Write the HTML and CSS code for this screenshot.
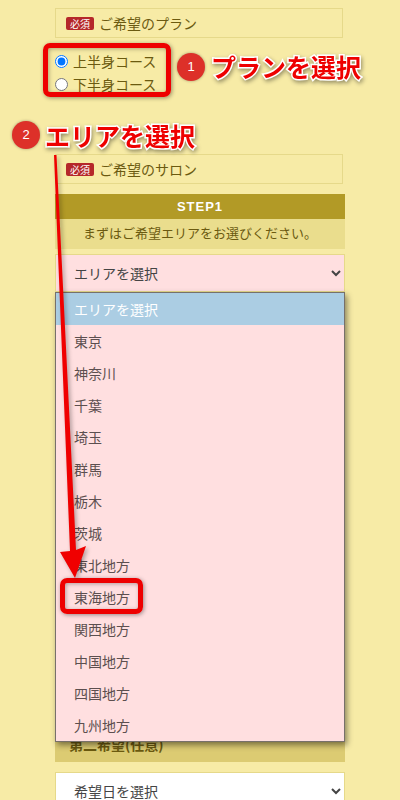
FILE: index.html
```html
<!DOCTYPE html>
<html lang="ja">

<head>
    <title>ご希望のプラン</title>
    <meta http-equiv="Content-Type" content="text/html; charset=utf-8">
    <link rel="stylesheet" href="styles.css">
</head>

<body>
    <div id="form">
        <div class="heading"><span class="badge">必須</span>ご希望のプラン</div>
        <div class="plans">
            <label class="plan"><input type="radio" name="plan" checked>上半身コース</label>
            <label class="plan"><input type="radio" name="plan">下半身コース</label>
        </div>
        <div class="heading salon"><span class="badge">必須</span>ご希望のサロン</div>
        <div class="stepbar">STEP1</div>
        <div class="stepnote">まずはご希望エリアをお選びください。</div>
        <select class="picker pink"><option>エリアを選択</option></select>
        <div class="second">第二希望(任意)</div>
        <select class="picker"><option>希望日を選択</option></select>
    </div>

    <ul class="dropdown">
        <li class="selected">エリアを選択</li>
        <li>東京</li>
        <li>神奈川</li>
        <li>千葉</li>
        <li>埼玉</li>
        <li>群馬</li>
        <li>栃木</li>
        <li>茨城</li>
        <li>東北地方</li>
        <li>東海地方</li>
        <li>関西地方</li>
        <li>中国地方</li>
        <li>四国地方</li>
        <li>九州地方</li>
    </ul>

    <!-- annotations drawn over the screenshot -->
    <div class="redbox radios"></div>
    <div class="redbox tokai"></div>
    <svg class="arrow" width="400" height="800" viewBox="0 0 400 800">
        <polygon points="54,155 56.5,155 76,550 86,546 75,578 60,552 70,551" fill="#f00000" />
    </svg>
    <div class="num one">1</div>
    <div class="note noteone">プランを選択</div>
    <div class="num two">2</div>
    <div class="note notetwo">エリアを選択</div>
</body>

</html>
```

FILE: styles.css
```css
* {
    box-sizing: border-box;
}

html,
body {
    height: 800px;
    overflow: hidden;
}

body {
    margin: 0;
    position: relative;
    background-color: #f7eba6;
    color: #6b5a10;
    font-family: "Noto Sans CJK JP", "Noto Sans", sans-serif;
    font-size: 14px;
}

#form {
    width: 290px;
    margin-left: 55px;
    padding-top: 8px;
    display: flex;
    flex-direction: column;
}

.heading {
    width: 288px;
    height: 30px;
    padding-left: 10px;
    display: flex;
    align-items: center;
    gap: 5px;
    border: 1px solid #e6d98a;
    line-height: 20px;
    margin-bottom: 12px;
}

.badge {
    width: 28px;
    height: 13px;
    border-radius: 2px;
    background-color: #b5282a;
    color: white;
    font-size: 10px;
    line-height: 13px;
    text-align: center;
    font-family: "Noto Sans CJK JP", serif;
}

.plans {
    height: 104px;
    display: flex;
    flex-direction: column;
    padding-top: 0;
}

.plan {
    height: 23px;
    display: flex;
    align-items: center;
    gap: 5px;
    line-height: 23px;
}

.plan input {
    width: 13px;
    height: 13px;
    margin: 0;
    flex: none;
}

.salon {
    margin-bottom: 10px;
}

.stepbar {
    height: 25px;
    background-color: #b29a26;
    color: white;
    font-family: "Liberation Sans", sans-serif;
    font-weight: bold;
    font-size: 13px;
    letter-spacing: 1px;
    line-height: 25px;
    text-align: center;
}

.stepnote {
    height: 30px;
    margin-bottom: 5px;
    background-color: #eadd8d;
    line-height: 28px;
    font-size: 13px;
    text-align: center;
}

.picker {
    width: 290px;
    height: 38px;
    padding-left: 14px;
    border: 1px solid #e6d98a;
    border-radius: 0;
    background-color: white;
    color: #444;
    font-family: "Noto Sans CJK JP", sans-serif;
    font-size: 14px;
}

.pink {
    background-color: #ffdfe0;
    margin-bottom: 434px;
}

.second {
    height: 36px;
    margin-bottom: 10px;
    padding: 0 0 8px 14px;
    display: flex;
    align-items: flex-end;
    background-color: #dccb72;
    font-weight: bold;
}

.dropdown {
    position: absolute;
    left: 55px;
    top: 292px;
    width: 290px;
    margin: 0;
    padding: 0;
    list-style: none;
    background-color: #ffdfe0;
    border: 1px solid #77706a;
    box-shadow: 2px 3px 6px rgba(0, 0, 0, 0.45);
    color: #5c4f4f;
}

.dropdown li {
    height: 32px;
    padding-left: 18px;
    line-height: 32px;
}

.dropdown .selected {
    background-color: #abcde3;
    color: white;
}

.redbox {
    position: absolute;
    border: 5px solid #ee0000;
    border-radius: 7px;
    box-shadow: 1px 1px 4px rgba(0, 0, 0, 0.4), inset 1px 1px 4px rgba(0, 0, 0, 0.3);
}

.radios {
    left: 43px;
    top: 43px;
    width: 128px;
    height: 54px;
}

.tokai {
    left: 60px;
    top: 578px;
    width: 83px;
    height: 36px;
}

.arrow {
    position: absolute;
    left: 0;
    top: 0;
    filter: drop-shadow(2px 2px 2px rgba(0, 0, 0, 0.3));
}

.num {
    position: absolute;
    width: 28px;
    height: 28px;
    border-radius: 50%;
    background-color: #dd3029;
    box-shadow: 0 0 3px rgba(0, 0, 0, 0.35);
    color: white;
    font-family: "Liberation Sans", sans-serif;
    font-size: 13px;
    line-height: 28px;
    text-align: center;
}

.one {
    left: 177px;
    top: 53px;
}

.two {
    left: 12px;
    top: 121px;
}

.note {
    position: absolute;
    color: #ee0000;
    font-weight: bold;
    font-size: 25px;
    line-height: 30px;
    white-space: nowrap;
    -webkit-text-stroke: 3px white;
    paint-order: stroke fill;
    filter: drop-shadow(1px 2px 2px rgba(0, 0, 0, 0.4));
}

.noteone {
    left: 211px;
    top: 51px;
}

.notetwo {
    left: 45px;
    top: 120px;
}
```
